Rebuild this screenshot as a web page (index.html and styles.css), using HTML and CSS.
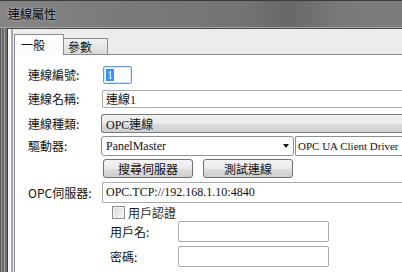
FILE: index.html
```html
<!DOCTYPE html>
<html lang="zh-Hant">
<head>
    <meta charset="UTF-8">
    <meta name="viewport" content="width=device-width, initial-scale=1.0">
    <title>連線屬性</title>
    <link rel="stylesheet" href="styles.css">
</head>
<body>

    <div class="window">
        <div class="titlebar"><span class="title">連線屬性</span></div>

        <div class="frame">
            <div class="frame-left"></div>
            <div class="client">
                <div class="tabs">
                    <div class="tab active">一般</div>
                    <div class="tab">參數</div>
                    <div class="tab-fill"></div>
                </div>

                <div class="panel">
                    <div class="row r1">
                        <span class="label">連線編號:</span>
                        <div class="field small focused"><span class="sel">1</span></div>
                    </div>
                    <div class="row r2">
                        <span class="label">連線名稱:</span>
                        <div class="field wide">連線1</div>
                    </div>
                    <div class="row r3">
                        <span class="label">連線種類:</span>
                        <div class="combo wide">OPC連線</div>
                    </div>
                    <div class="row r4">
                        <span class="label">驅動器:</span>
                        <div class="field driver">PanelMaster<span class="arrow"></span></div>
                        <div class="field wide driver-name">OPC UA Client Driver</div>
                    </div>
                    <div class="row r5">
                        <button class="btn">搜尋伺服器</button>
                        <button class="btn">測試連線</button>
                    </div>
                    <div class="row r6">
                        <span class="label">OPC伺服器:</span>
                        <div class="field wide">OPC.TCP://192.168.1.10:4840</div>
                    </div>
                    <div class="row r7">
                        <span class="check"></span>
                        <span>用戶認證</span>
                    </div>
                    <div class="row r8 sub">
                        <span class="label sub-label">用戶名:</span>
                        <div class="field auth"></div>
                    </div>
                    <div class="row r9 sub">
                        <span class="label sub-label">密碼:</span>
                        <div class="field auth"></div>
                    </div>
                </div>
            </div>
        </div>
    </div>

</body>
</html>
```

FILE: styles.css
```css
body { margin: 0; width: 402px; height: 272px; overflow: hidden; background: #ececec; font-family: "Noto Sans CJK TC", sans-serif; font-size: 12px; color: #1e1e1e; }

.window { width: 402px; height: 272px; display: flex; flex-direction: column; }

.titlebar { height: 26px; border-top: 1px solid #3c3c3c; border-bottom: 1px solid #a4a4a4; display: flex; align-items: center; padding-left: 8px;
    background: linear-gradient(to right, #858585 0, #7a7a7a 30%, #747474 60%, #686868 72%, #7a7a7a 85%, #7c7c7c 100%); }
.title { line-height: 14px; color: #000; text-shadow: 0 0 3px rgba(255, 255, 255, 0.7); }

.frame { flex: 1; display: flex; }
.frame-left { width: 8px; background: linear-gradient(to right, #5a5a5a 0 1px, #8c8c8c 1px 2px, #6b6b6b 2px 4px, #9b9b9b 4px 5px, #6e6e6e 5px 7px, #3c3c3c 7px 8px); }
.client { flex: 1; display: flex; flex-direction: column; border-top: 1px solid #4a4a4a; background: #ececec; padding-left: 6px;
    box-shadow: inset 3px 0 0 #f6f6f6, inset 5px 0 0 #a8a8a8; }

.tabs { height: 26px; display: flex; align-items: flex-end; }
.tab { height: 17px; width: 44px; padding-left: 4px; box-sizing: border-box; line-height: 16px; border: 1px solid #898c95; border-left: none;
    background: linear-gradient(#f3f3f3, #d8d8d8); color: #111; }
.tab.active { height: 21px; width: 50px; padding-left: 6px; line-height: 20px; border-left: 1px solid #898c95; border-bottom: none; background: #fcfcfc; }
.tab-fill { flex: 1; border-bottom: 1px solid #898c95; }

.panel { flex: 1; background: #fff; border-left: 1px solid #898c95; padding: 11px 0 0 13px; }

.row { display: flex; align-items: center; }
.label { width: 74px; flex-shrink: 0; line-height: 14px; color: #111; }
.r1 { height: 18px; }
.r2 { height: 18px; margin-top: 6px; }
.r3 { height: 19px; margin-top: 6px; }
.r4 { height: 20px; margin-top: 3px; }
.r5 { height: 19px; margin-top: 3px; padding-left: 75px; gap: 10px; }
.r6 { height: 21px; margin-top: 4px; }
.r7 { height: 13px; margin-top: 3px; padding-left: 84px; gap: 3px; line-height: 13px; }
.r8 { height: 21px; margin-top: 2px; }
.r9 { height: 21px; margin-top: 4px; }
.sub { padding-left: 82px; }
.sub-label { width: 68px; }

.field { height: 100%; box-sizing: border-box; border: 1px solid #a9abb1; border-radius: 2px; background: #fff; padding-left: 3px;
    display: flex; align-items: center; font-family: "Liberation Serif", "Noto Sans CJK TC", serif; font-size: 12px; color: #111; }
.small { width: 29px; margin-left: 1px; padding-left: 2px; }
.focused { border-color: #5d9cd8; box-shadow: inset 0 0 0 1px #d7e8f8; }
.sel { background: #3390ff; color: #fff; line-height: 12px; padding: 0 1px; }

.combo { height: 100%; box-sizing: border-box; margin-left: -1px; border: 1px solid #7a7a7a; border-radius: 3px; padding-left: 4px;
    background: linear-gradient(#f2f2f2 0, #ebebeb 50%, #dddddd 50%, #cfcfcf 100%); display: flex; align-items: center;
    font-family: "Liberation Serif", "Noto Sans CJK TC", serif; font-size: 12px; color: #111; }

/* fields run on past the cropped right edge of the dialog */
.wide { flex: 1; border-right: none; border-top-right-radius: 0; border-bottom-right-radius: 0; }

.driver { width: 193px; flex-shrink: 0; margin-left: -1px; padding-left: 4px; border-color: #8e8f8f; border-radius: 3px; }
.arrow { margin-left: auto; margin-right: 4px; width: 0; height: 0; border-left: 3px solid transparent; border-right: 3px solid transparent; border-top: 4px solid #111; }
.driver-name { margin-left: 1px; padding-left: 2px; font-size: 11px; border-color: #8e8f8f; white-space: nowrap; overflow: hidden; }

.btn { width: 90px; height: 19px; padding: 0; border: 1px solid #707070; border-radius: 3px; font-family: "Noto Sans CJK TC", sans-serif; font-size: 12px; color: #111;
    background: linear-gradient(#f2f2f2 0, #ebebeb 50%, #dddddd 50%, #cfcfcf 100%); line-height: 15px; }

.check { width: 11px; height: 11px; border: 1px solid #8e8f8f; background: linear-gradient(135deg, #dcdcdc, #f6f6f6); box-shadow: inset 0 0 0 1px #f4f4f4; }

.auth { width: 151px; }
```
